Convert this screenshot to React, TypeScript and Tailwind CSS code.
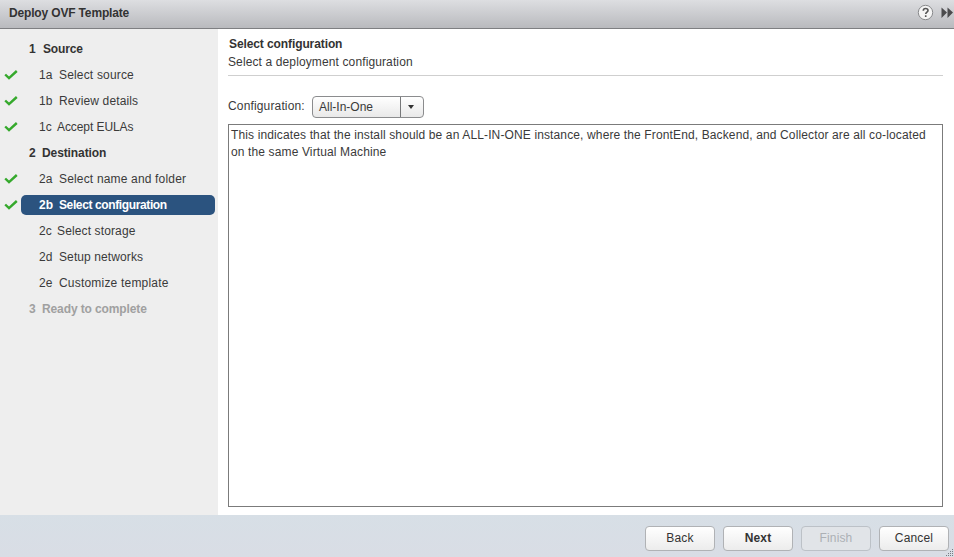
type Step = { no: string; label: string; done?: boolean; kind?: "group" | "active" | "disabled"; noCls: string; cls: string };

const steps: Step[] = [
  { no: "1", label: "Source", kind: "group", noCls: "w-[14px]", cls: "tracking-[-0.15px]" },
  { no: "1a", label: "Select source", done: true, noCls: "w-5", cls: "tracking-[0.17px]" },
  { no: "1b", label: "Review details", done: true, noCls: "w-5", cls: "tracking-[0.13px]" },
  { no: "1c", label: "Accept EULAs", done: true, noCls: "w-[18px]", cls: "tracking-[-0.08px]" },
  { no: "2", label: "Destination", kind: "group", noCls: "w-[13px]", cls: "tracking-[-0.1px]" },
  { no: "2a", label: "Select name and folder", done: true, noCls: "w-5", cls: "tracking-[0.17px]" },
  { no: "2b", label: "Select configuration", done: true, kind: "active", noCls: "w-5", cls: "tracking-[-0.38px]" },
  { no: "2c", label: "Select storage", noCls: "w-[18px]", cls: "tracking-[0.13px]" },
  { no: "2d", label: "Setup networks", noCls: "w-5", cls: "tracking-[0.1px]" },
  { no: "2e", label: "Customize template", noCls: "w-5", cls: "tracking-[0.2px]" },
  { no: "3", label: "Ready to complete", kind: "disabled", noCls: "w-[13px]", cls: "tracking-[-0.11px]" },
];

function Check() {
  return (
    <svg width="14" height="10" viewBox="0 0 14 10" fill="none" stroke="#35a92c" strokeWidth="2.4">
      <path d="M1.200 4.500 5 8.100 12.800 1" />
    </svg>
  );
}

function StepRow({ step }: { step: Step }) {
  const top = step.kind === "group" || step.kind === "disabled";
  const tone =
    step.kind === "active"
      ? "rounded-[5px] bg-[#2b537f] font-bold text-white"
      : step.kind === "group"
        ? "font-bold text-[#333]"
        : step.kind === "disabled"
          ? "font-bold text-[#a0a0a0]"
          : "text-[#3a3a3a]";
  return (
    <li className="flex h-[26px] items-center">
      <span className="w-[21px] shrink-0 pl-1">{step.done && <Check />}</span>
      <div className={`flex h-5 w-[194px] items-center whitespace-nowrap ${top ? "pl-2" : "pl-[18px]"} ${tone}`}>
        <span className={`shrink-0 ${step.noCls}`}>{step.no}</span>
        <span className={step.cls}>{step.label}</span>
      </div>
    </li>
  );
}

function Button({ children, cls = "" }: { children: string; cls?: string }) {
  return (
    <button
      className={`h-[25px] w-[70px] rounded-[4px] border tracking-[0.15px] ${cls || "border-[#b0b2b5] bg-linear-to-b from-white to-[#ececec] text-[#333]"}`}
    >
      {children}
    </button>
  );
}

export default function App() {
  return (
    <div className="flex h-[557px] w-[954px] flex-col overflow-hidden bg-white font-['Liberation_Sans',Arial,sans-serif] text-[12px] leading-[17px] text-[#3a3a3a]">
      <header className="flex h-[29px] shrink-0 items-center border-b border-[#7e7f82] bg-linear-to-b from-[#dddee1] to-[#b9babe] pb-[3px] pl-[9px]">
        <h1 className="grow pt-[2px] font-bold tracking-[-0.16px] text-[#333]">Deploy OVF Template</h1>
        <svg width="37" height="18" viewBox="0 0 37 18" className="shrink-0">
          <circle cx="8.500" cy="8.500" r="7.200" fill="#f5f5f5" stroke="#88898b" />
          <path d="M6.300 6.700C6.300 5 7.300 4.500 8.600 4.500S11 5.200 11 6.500C11 8.100 8.700 8.100 8.700 10M8.700 11.200v1.700" fill="none" stroke="#555" strokeWidth="1.600" />
          <path d="M24.500 3.500 30 8.500l-5.500 5.500zM30.500 3.500 36 8.500l-5.500 5.500z" fill="#4b4b4d" />
        </svg>
      </header>
      <div className="flex min-h-0 grow">
        <nav className="w-[218px] shrink-0 bg-[#eeeeee] pt-[7px]">
          <ul>
            {steps.map((s) => (
              <StepRow key={s.no} step={s} />
            ))}
          </ul>
        </nav>
        <main className="flex grow flex-col pt-[7px] pr-[11px] pb-2 pl-[10px]">
          <div className="h-10 shrink-0 border-b border-[#cfcfcf]">
            <h2 className="h-[18px] pl-px font-bold tracking-[-0.1px] text-[#333]">Select configuration</h2>
            <p className="tracking-[0.12px]">Select a deployment configuration</p>
          </div>
          <div className="mt-5 flex h-[22px] shrink-0 items-center">
            <span className="w-[84px] pb-[2px] tracking-[0.15px]">Configuration:</span>
            <button className="flex h-[22px] w-[112px] items-center rounded-[4px] border border-[#8b8c8e] bg-linear-to-b from-white to-[#e9e9e9]">
              <span className="w-[87px] pl-[6px] text-left">All-In-One</span>
              <span className="flex h-5 grow items-center justify-center border-l border-[#77787a] pr-[2px]">
                <svg width="6" height="4" viewBox="0 0 6 4">
                  <path d="M0 0h6L3 4z" fill="#333" />
                </svg>
              </span>
            </button>
          </div>
          <div className="mt-[6px] grow border border-[#7b7b7b] pt-[2px] pl-[2px] tracking-[0.129px]">
            <p>This indicates that the install should be an ALL-IN-ONE instance, where the FrontEnd, Backend, and Collector are all co-located</p>
            <p>on the same Virtual Machine</p>
          </div>
        </main>
      </div>
      <footer className="relative flex h-[42px] shrink-0 items-center justify-end gap-2 bg-linear-to-b from-[#d7dfe6] to-[#d9dde5] pt-[5px] pr-[5px]">
        <Button>Back</Button>
        <Button cls="border-[#b0b2b5] bg-linear-to-b from-white to-[#ececec] font-bold text-[#333]">Next</Button>
        <Button cls="border-[#bcc1c7] bg-[#e1e4e8] text-[#acb0b5]">Finish</Button>
        <Button>Cancel</Button>
        <svg width="8" height="8" viewBox="0 0 8 8" className="absolute right-0 bottom-0" fill="#777c83">
          <path d="M6 0h1v1H6zM4 2h1v1H4zM6 2h1v1H6zM2 4h1v1H2zM4 4h1v1H4zM6 4h1v1H6zM0 6h1v1H0zM2 6h1v1H2zM4 6h1v1H4zM6 6h1v1H6z" />
        </svg>
      </footer>
    </div>
  );
}
